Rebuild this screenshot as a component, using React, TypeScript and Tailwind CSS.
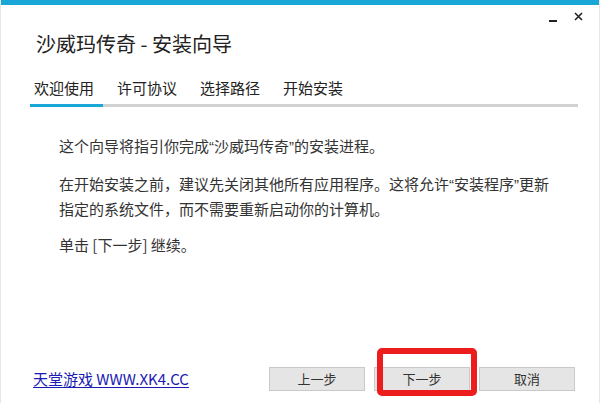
const FONT = "font-['Noto_Sans_CJK_SC','Noto_Sans',sans-serif]";

const tabs = ["欢迎使用", "许可协议", "选择路径", "开始安装"];

// narrow latin-width quotes like the original dialog
function Q({ children }: { children: string }) {
  return <span className="font-['Liberation_Sans',sans-serif]">{children}</span>;
}

function WizardButton({ label }: { label: string }) {
  return (
    <button className="h-[24px] w-[96px] border border-[#c9c9c9] bg-[#e5e5e5] text-[13px] text-[#333]">
      {label}
    </button>
  );
}

export default function App() {
  return (
    <div
      className={`relative flex h-[403px] w-[600px] flex-col overflow-hidden border-x border-[#e6e6e6] bg-white ${FONT}`}
    >
      {/* Accent bar */}
      <div className="h-[5px] bg-[#19a7d8]" />

      {/* Window controls */}
      <div className="flex h-[20px] items-start justify-end gap-[17px] pr-[16px]">
        <div className="mt-[15px] h-[2px] w-[8px] bg-[#222]" />
        <svg width="9" height="9" viewBox="0 0 9 9" className="mt-[7px]">
          <path d="M1 1L8 8M8 1L1 8" stroke="#222" strokeWidth="1.6" />
        </svg>
      </div>

      {/* Title */}
      <h1 className="mt-[5px] pl-[35px] text-[20px] leading-[28px] text-[#222]">
        沙威玛传奇 - 安装向导
      </h1>

      {/* Tabs */}
      <div className="mt-[20px] flex gap-[23px] pl-[33px] text-[15px] leading-[20px] text-[#222]">
        {tabs.map((t) => (
          <span key={t}>{t}</span>
        ))}
      </div>
      <div className="ml-[29px] mt-[6px] h-[3px] w-[548px] bg-[#d2d2d2]">
        <div className="h-full w-[73px] bg-[#19a7d8]" />
      </div>

      {/* Body */}
      <div className="mt-[27px] pl-[58px] text-[15px] leading-[24px] text-[#333]">
        <p className="whitespace-nowrap">
          这个向导将指引你完成<Q>“</Q>沙威玛传奇<Q>”</Q>的安装进程。
        </p>
        <p className="mt-[13px] whitespace-nowrap">
          在开始安装之前，建议先关闭其他所有应用程序。这将允许<Q>“</Q>安装程序<Q>”</Q>更新
          <br />
          指定的系统文件，而不需要重新启动你的计算机。
        </p>
        <p className="mt-[12px] whitespace-nowrap">单击 [下一步] 继续。</p>
      </div>

      {/* Footer */}
      <div className="mt-auto flex items-center pb-[12px] pl-[32px] pr-[24px]">
        <a className="text-[15px] text-[#1a1ab4] underline underline-offset-2">
          天堂游戏 WWW.XK4.CC
        </a>
        <div className="ml-auto flex gap-[9px]">
          <WizardButton label="上一步" />
          <WizardButton label="下一步" />
          <WizardButton label="取消" />
        </div>
      </div>

      {/* Red highlight annotation */}
      <div className="absolute left-[376px] top-[348px] h-[48px] w-[100px] rounded-[5px] border-[6px] border-[#ee1d1d]" />
    </div>
  );
}
